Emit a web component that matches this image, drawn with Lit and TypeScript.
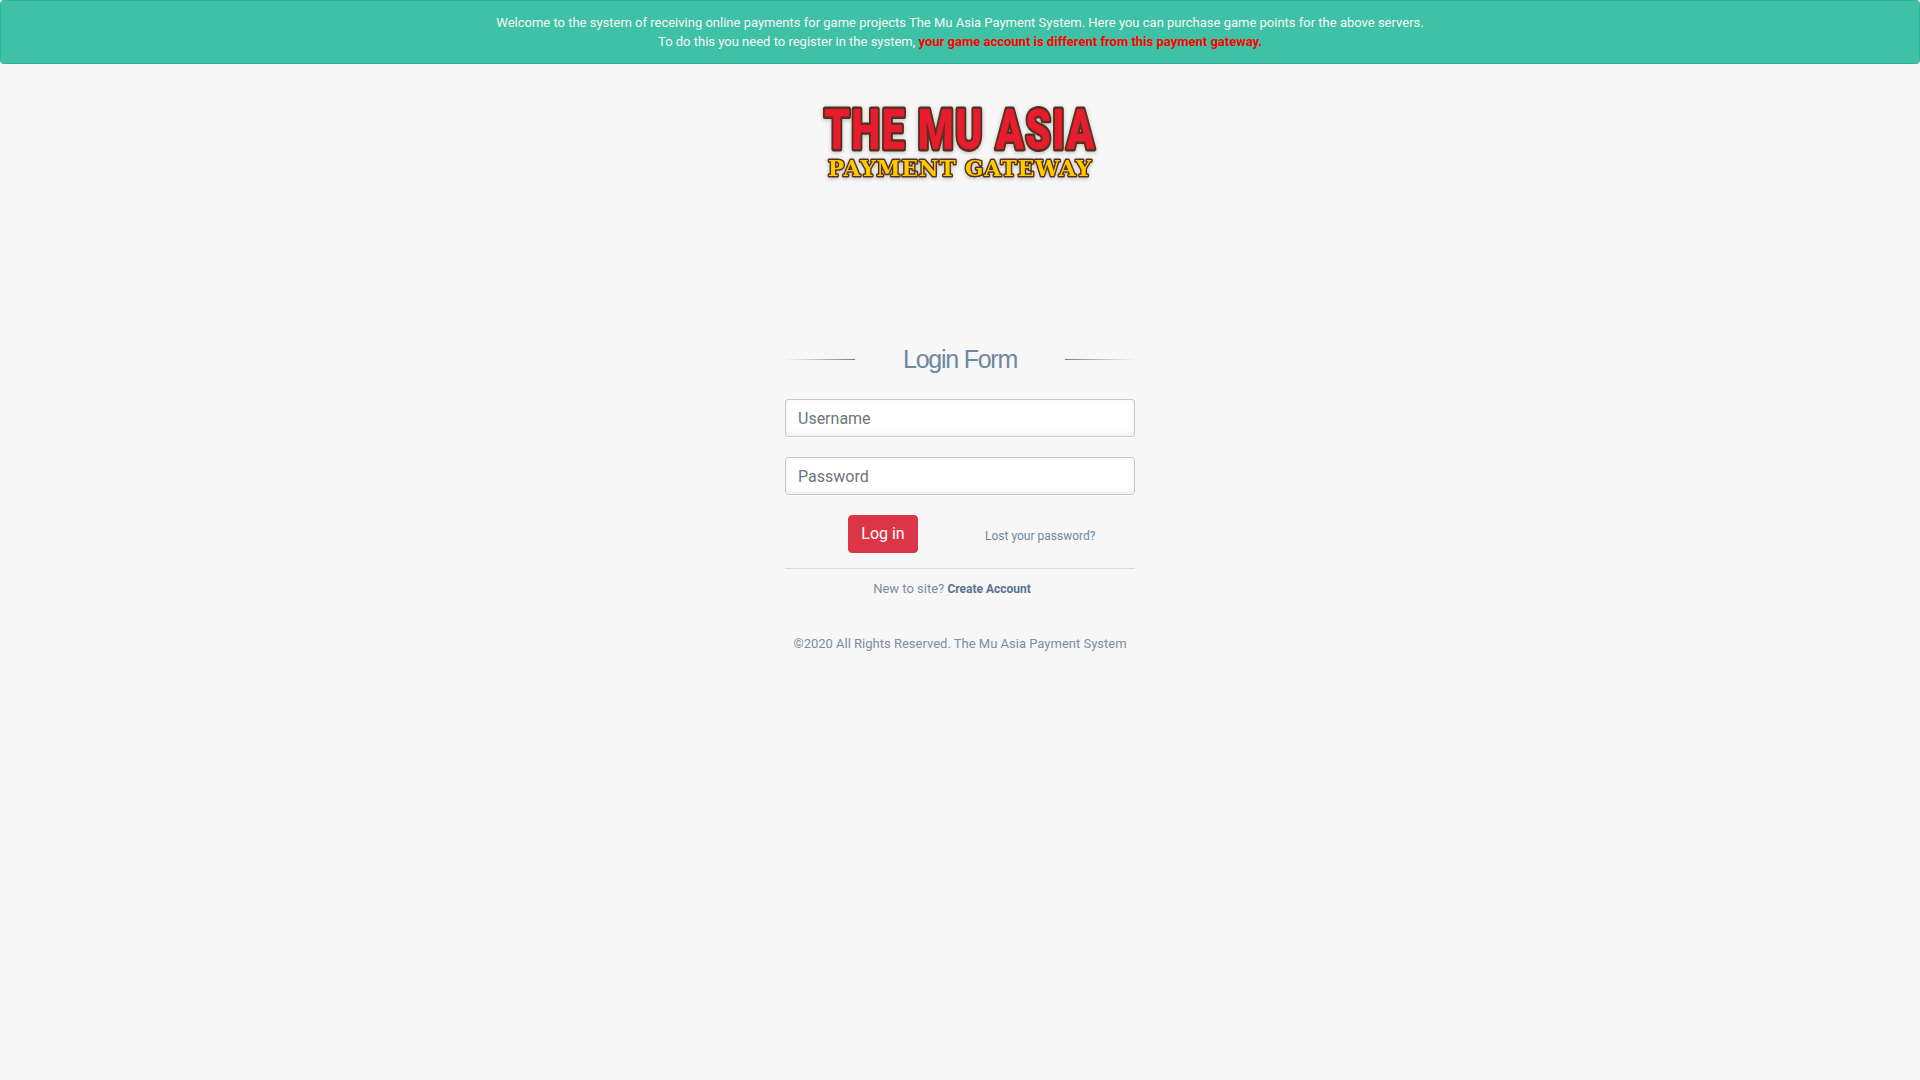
import { LitElement, html, css } from "lit";
import { customElement } from "lit/decorators.js";

@customElement("app-root")
export class AppRoot extends LitElement {
  static styles = css`
    :host {
      display: block;
      min-height: 1080px;
      background: #f7f7f7;
      color: #7b8ea3;
      font-family: Roboto, "Liberation Sans", sans-serif;
      font-size: 13px;
      line-height: 1.471;
    }
    * { box-sizing: border-box; }
    .alert {
      height: 64px;
      padding: 12px 20px;
      background: rgba(38, 185, 154, 0.88);
      border: 1px solid #2bb597;
      border-radius: 4px;
      color: #f6f8f8;
      text-align: center;
    }
    .alert b { color: #ff0000; font-weight: 700; }
    .logo { display: flex; justify-content: center; padding-top: 30px; height: 276px; }
    .logo svg { display: block; width: 320px; height: 110px; overflow: visible; }
    .logo text { paint-order: stroke; stroke-linejoin: round; }
    .big { font-family: Roboto, sans-serif; font-weight: 900; font-size: 55px; letter-spacing: 2px; fill: #e81f2e; stroke: #55301f; stroke-width: 5px; }
    .small { font-family: "DejaVu Serif", serif; font-weight: 700; font-size: 23px; letter-spacing: 1px; fill: #ffcb05; stroke: #55301f; stroke-width: 3px; }
    .form { width: 350px; margin: 0 auto; text-align: center; }
    .title { display: flex; align-items: center; justify-content: space-between; height: 39px; margin-bottom: 20px; }
    .title h1 { margin: 0; font: 400 25px/39px "Liberation Sans", sans-serif; letter-spacing: -0.05em; color: #6f87a3; }
    .rule { width: 70px; height: 1px; }
    .rule.l { background: linear-gradient(to right, rgba(126,126,126,0), #7e7e7e); }
    .rule.r { background: linear-gradient(to right, #7e7e7e, rgba(126,126,126,0)); }
    input {
      display: block;
      width: 100%;
      height: 38px;
      margin: 0 0 20px;
      padding: 6px 12px;
      background: #fff;
      border: 1px solid #c8c8c8;
      border-radius: 3px;
      box-shadow: 0 1px 0 #fff, 0 -2px 5px rgba(0, 0, 0, 0.08) inset;
      font: 400 16px Roboto, sans-serif;
      color: #495057;
      outline: none;
    }
    input::placeholder { color: #6c757d; opacity: 1; }
    .actions { display: flex; align-items: center; padding-left: 63px; gap: 67px; height: 38px; }
    .btn {
      width: 70px;
      height: 38px;
      padding: 0;
      background: #dc3545;
      border: 1px solid #dc3545;
      border-radius: 4px;
      color: #fff;
      font: 400 16px/1.5 Roboto, sans-serif;
    }
    .lost { font-size: 12px; color: #73879c; text-decoration: none; padding-top: 5px; }
    .sep { margin-top: 15px; padding-top: 10px; border-top: 1px solid #d8d8d8; }
    .sep a { font-size: 12px; font-weight: 700; color: #5a738e; text-decoration: none; }
    .new { margin: 0; padding-right: 16px; }
    .copy { margin: 35px 0 0; }
  `;

  render() {
    return html`
      <div class="alert">
        Welcome to the system of receiving online payments for game projects The Mu Asia Payment System. Here you can purchase game points for the above servers.<br />
        To do this you need to register in the system, <b>your game account is different from this payment gateway.</b>
      </div>
      <div class="logo">
        <svg viewBox="0 0 320 110" role="img" aria-label="The Mu Asia Payment Gateway">
          <defs>
            <filter id="s" x="-10%" y="-20%" width="120%" height="140%">
              <feDropShadow dx="0" dy="1" stdDeviation="2" flood-color="#000" flood-opacity="0.25" />
            </filter>
          </defs>
          <g filter="url(#s)">
            <text class="big" x="24" y="55" textLength="272" lengthAdjust="spacingAndGlyphs">THE MU ASIA</text>
            <text class="small" x="28" y="82" textLength="264" lengthAdjust="spacingAndGlyphs">PAYMENT GATEWAY</text>
          </g>
        </svg>
      </div>
      <div class="form">
        <div class="title">
          <span class="rule l"></span>
          <h1>Login Form</h1>
          <span class="rule r"></span>
        </div>
        <input type="text" placeholder="Username" />
        <input type="password" placeholder="Password" />
        <div class="actions">
          <button class="btn">Log in</button>
          <a class="lost" href="#">Lost your password?</a>
        </div>
        <div class="sep">
          <p class="new">New to site? <a href="#">Create Account</a></p>
          <p class="copy">©2020 All Rights Reserved. The Mu Asia Payment System</p>
        </div>
      </div>
    `;
  }
}
